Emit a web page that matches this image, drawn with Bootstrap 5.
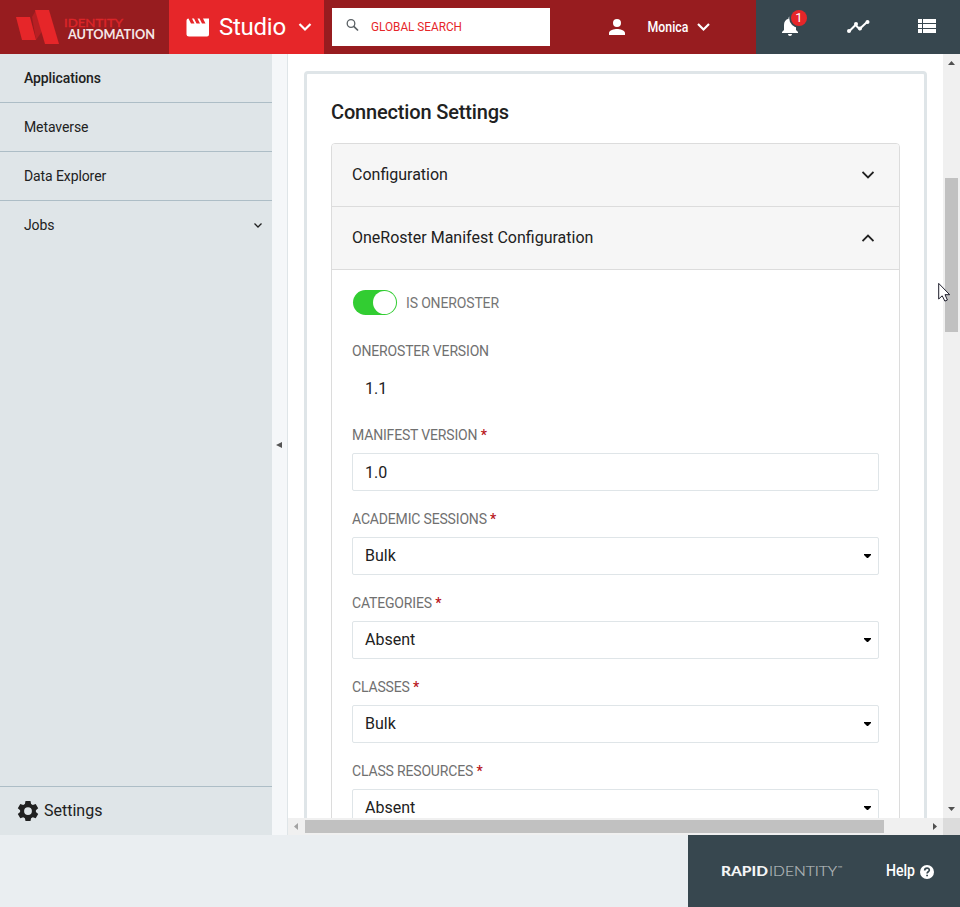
<!DOCTYPE html>
<html lang="en">
<head>
<meta charset="utf-8">
<meta name="viewport" content="width=device-width, initial-scale=1">
<title>Studio - Connection Settings</title>
<link href="https://cdn.jsdelivr.net/npm/bootstrap@5.3.0/dist/css/bootstrap.min.css" rel="stylesheet">
<style>
body{font-family:Roboto,"Liberation Sans",sans-serif;font-size:14px;color:#212121;background:#eaeef1;height:907px;overflow:hidden}
svg{display:block;flex:none}
.topbar{height:54px;background:#971c1f;color:#fff}
.brand-box{width:169px}
.studio-box{width:155px;background:#e62629;font-size:24px;padding-left:16px}
.studio-box span{margin-left:9px;width:67px;white-space:nowrap;letter-spacing:-.25px}
.search-box{width:218px;height:38px;margin-left:8px;padding-left:14px;color:#e62629;font-size:13px}
.search-box span{margin-left:12px;transform:scaleX(.905);transform-origin:left}
.user-box{margin-left:55px;width:151px;font-weight:500}
.user-name{width:44px;margin-left:15px;transform:scaleX(.88);transform-origin:left;white-space:nowrap}
.tools{background:#37474f}
.bell{left:22px;top:14px}
.count{left:35px;top:10px;width:16px;height:16px;background:#e62629;font-size:13px;line-height:16px}
.workspace{height:781px}
.side{width:272px;background:#dfe5e8}
.side a{height:49px;padding:0 8px 0 24px;color:#212121;border-bottom:1px solid #adbdc6;letter-spacing:-.1px}
.side div a:last-child{border:0}
.side a.settings{border-top:1px solid #adbdc6;border-bottom:0;padding-left:17px;font-size:16px;letter-spacing:0}
.gutter{width:16px;background:#f5f7f9;border-right:1px solid #dfe5e8;padding-right:2px}
.viewport-box{width:655px;height:764px;padding:17px 16px 0}
.panel-box{border:3px solid #dfe5e8;border-radius:4px;height:1100px;padding:23px 24px 0}
h1{font-size:20px;line-height:30px;font-weight:500;margin:0 0 16px;letter-spacing:-.16px}
.sections{border-color:#dcdcdc;border-radius:4px;font-size:16px;color:#212121}
.sections .card-header{height:63px;padding:0 25px 1px 20px;background:#f6f6f6;border-color:#dcdcdc}
.sections .card-header:first-child{border-radius:3px 3px 0 0}
.sections .card-body{padding:0 20px}
.toggle-row{height:69px;padding:0 0 4px 1px;color:#757575;font-size:14px}
.toggle-name{margin-left:9px;padding-top:2px;letter-spacing:-.15px}
.switch-pill{width:44px;height:25px;border-radius:13px;background:#32cd32;padding:1px}
.switch-pill i{width:23px;height:23px;border-radius:50%;background:#fff}
.field-group{height:84px}
.field-group label{display:block;height:24px;line-height:24px;margin-bottom:6px;font-size:14px;color:#707070;letter-spacing:-.17px}
.field-group b{color:#b8141a;font-weight:500}
.value-box{height:38px;padding:2px 7px 0 12px;border:1px solid #dfe5e8;border-radius:2px}
.value-box.plain{border-color:transparent}
.value-box.pick{padding-top:0}
.pick svg{margin-top:-1px}
.vbar{width:17px;height:764px;background:#f0f0f0;padding:7px 2px 7px}
.vbar div{width:13px;height:154px;background:#c1c1c1;margin-top:113px}
.hbar{height:17px;background:#f0f0f0}
.hbar div{width:579px;height:13px;background:#c1c1c1;margin-left:6px}
.corner{width:17px;height:17px;background:#dcdcdc}
.pointer{left:938px;top:283px}
footer{height:72px}
.foot{width:272px;background:#37474f;color:#fff;padding-left:33px}
.help{font-size:16px;font-weight:500;margin-left:41px;width:29px;transform:scaleX(.88);transform-origin:left}
</style>
<script src="https://cdn.jsdelivr.net/npm/bootstrap@5.3.0/dist/js/bootstrap.bundle.min.js"></script>
</head>
<body>
<header class="topbar d-flex align-items-stretch">
  <div class="brand-box">
    <svg width="169" height="54" viewBox="0 0 169 54">
      <path d="M32 17L36 10L43 30L36 40Z" fill="#b71f23"/>
      <path d="M16 17H30L36 40H22Z" fill="#e62629"/><path d="M35 10H49L59 44H45Z" fill="#e62629"/>
      <text x="64" y="26.500" font-family="Lato,sans-serif" font-size="11.800" font-weight="400" fill="#dc2529" stroke="#dc2529" stroke-width=".4" textLength="59" lengthAdjust="spacingAndGlyphs">IDENTITY</text>
      <text x="68" y="39" font-family="Lato,sans-serif" font-size="12.500" font-weight="700" fill="#f5e6e6" textLength="87" lengthAdjust="spacingAndGlyphs">AUTOMATION</text>
    </svg>
  </div>
  <div class="studio-box d-flex align-items-center">
    <svg width="25" height="27" viewBox="0 0 25 27"><path fill="#fff" d="M3.500 4.500L6 9.500H9.500L7 4.500H9L11.500 9.500H15L12.500 4.500H14.500L17 9.500H20.500L18 4.500H24V20.500Q24 22.500 22 22.500H4Q1.500 22.500 1.500 20.500V6.500Q1.500 4.500 3.500 4.500Z"/></svg>
    <span>Studio</span>
    <svg class="ms-2" width="24" height="24" viewBox="0 0 24 24"><path d="M5.500 9L11 14.500L16.500 9" fill="none" stroke="#fff" stroke-width="2.200"/></svg>
  </div>
  <div class="search-box bg-white d-flex align-items-center align-self-center">
    <svg width="13" height="16" viewBox="0 0 13 16"><circle cx="5" cy="4.500" r="3.800" fill="none" stroke="#5b6165" stroke-width="1.300"/><path d="M7.800 7.300L12 11.500" stroke="#5b6165" stroke-width="1.700"/></svg>
    <span>GLOBAL SEARCH</span>
  </div>
  <div class="user-box d-flex align-items-center">
    <svg width="24" height="24" viewBox="0 0 24 24"><path fill="#fff" d="M12 12a4 4 0 1 0 0-8 4 4 0 0 0 0 8zm0 2c-2.700 0-8 1.300-8 4v2h16v-2c0-2.700-5.300-4-8-4z"/></svg>
    <span class="user-name ps-1">Monica</span>
    <svg class="ms-1" width="24" height="24" viewBox="0 0 24 24"><path d="M6 9L11.500 14.500L17 9" fill="none" stroke="#fff" stroke-width="2.200"/></svg>
  </div>
  <div class="tools flex-grow-1 d-flex align-items-center position-relative">
    <svg class="position-absolute bell" width="24" height="24" viewBox="0 0 24 24"><path fill="#fff" d="M12 22c1.100 0 2-.9 2-2h-4c0 1.100.9 2 2 2zm6-6v-5c0-3.100-1.600-5.600-4.500-6.300V4a1.500 1.500 0 0 0-3 0v.7C7.600 5.400 6 7.900 6 11v5l-2 2v1h16v-1l-2-2z"/><circle cx="21" cy="4" r="9.800" fill="#37474f"/></svg>
    <span class="position-absolute count rounded-circle text-center">1</span>
    <svg style="margin-left:90px" width="24" height="24" viewBox="0 0 24 24"><path d="M3 16.500L9.500 10L13.500 14L21 7" fill="none" stroke="#fff" stroke-width="2"/><g fill="#fff"><circle cx="3" cy="16" r="2"/><circle cx="10" cy="9" r="2"/><circle cx="14" cy="13.500" r="2"/><circle cx="21.500" cy="7" r="2"/></g></svg>
    <svg style="margin:-2px 0 0 45px" width="24" height="24" viewBox="0 0 24 24"><path fill="#fff" d="M3 5h4v4H3zm5 0h13v4H8zM3 10h4v4H3zm5 0h13v4H8zM3 15h4v4H3zm5 0h13v4H8z"/></svg>
  </div>
</header>
<main class="workspace d-flex">
  <nav class="side d-flex flex-column justify-content-between">
    <div class="d-flex flex-column">
      <a class="d-flex align-items-center text-decoration-none" style="font-weight:500" href="#">Applications</a>
      <a class="d-flex align-items-center text-decoration-none" href="#">Metaverse</a>
      <a class="d-flex align-items-center text-decoration-none" href="#">Data Explorer</a>
      <a class="d-flex align-items-center justify-content-between text-decoration-none" href="#">Jobs
        <svg width="12" height="12" viewBox="0 0 12 12"><path d="M2.500 3.500L6 7L9.500 3.500" fill="none" stroke="#212121" stroke-width="1.300"/></svg></a>
    </div>
    <a class="settings d-flex align-items-center text-decoration-none" href="#">
      <svg width="22" height="22" viewBox="1 1 22 22"><path fill="#212121" fill-rule="evenodd" d="M9.500 2h5l.6 3 1.700 1 2.900-1 2.500 4.200-2.300 2v1.900l2.300 2-2.500 4.100-2.900-1-1.700 1-.6 2.900h-5l-.6-2.900-1.700-1-2.900 1-2.500-4.100 2.300-2v-1.900l-2.300-2L4.300 5l2.900 1 1.700-1zM12 8.200a3.900 3.900 0 1 0 0 7.800 3.900 3.900 0 0 0 0-7.800z"/></svg>
      <span style="margin-left:5px">Settings</span></a>
  </nav>
  <div class="gutter d-flex align-items-center justify-content-center"><svg width="6" height="6" viewBox="0 0 6 6"><path d="M0 3L6 0V6Z" fill="#555"/></svg></div>
  <div class="bg-white flex-grow-1 d-flex flex-column">
    <div class="d-flex">
      <section class="viewport-box overflow-hidden">
        <div class="panel-box">
          <h1>Connection Settings</h1>
          <div class="card sections">
            <div class="card-header d-flex align-items-center justify-content-between">Configuration
              <svg width="12" height="12" viewBox="0 0 12 12"><path d="M.5 3L6 8.500L11.500 3" fill="none" stroke="#212121" stroke-width="1.800"/></svg></div>
            <div class="card-header d-flex align-items-center justify-content-between">OneRoster Manifest Configuration
              <svg width="12" height="12" viewBox="0 0 12 12"><path d="M.5 9L6 3.500L11.500 9" fill="none" stroke="#212121" stroke-width="1.800"/></svg></div>
            <div class="card-body">
              <div class="toggle-row d-flex align-items-center">
                <span class="switch-pill d-flex justify-content-end"><i></i></span><span class="toggle-name">IS ONEROSTER</span>
              </div>
              <div class="field-group"><label>ONEROSTER VERSION</label><div class="value-box plain d-flex align-items-center">1.1</div></div>
              <div class="field-group"><label>MANIFEST VERSION <b>*</b></label><div class="value-box d-flex align-items-center">1.0</div></div>
              <div class="field-group"><label>ACADEMIC SESSIONS <b>*</b></label><div class="value-box pick d-flex align-items-center justify-content-between">Bulk<svg width="7" height="4" viewBox="0 0 7 4"><path d="M0 0H7V1L4 4H3L0 1Z"/></svg></div></div>
              <div class="field-group"><label>CATEGORIES <b>*</b></label><div class="value-box pick d-flex align-items-center justify-content-between">Absent<svg width="7" height="4" viewBox="0 0 7 4"><path d="M0 0H7V1L4 4H3L0 1Z"/></svg></div></div>
              <div class="field-group"><label>CLASSES <b>*</b></label><div class="value-box pick d-flex align-items-center justify-content-between">Bulk<svg width="7" height="4" viewBox="0 0 7 4"><path d="M0 0H7V1L4 4H3L0 1Z"/></svg></div></div>
              <div class="field-group"><label>CLASS RESOURCES <b>*</b></label><div class="value-box pick d-flex align-items-center justify-content-between">Absent<svg width="7" height="4" viewBox="0 0 7 4"><path d="M0 0H7V1L4 4H3L0 1Z"/></svg></div></div>
            </div>
          </div>
        </div>
      </section>
      <div class="vbar d-flex flex-column">
        <svg class="align-self-center" width="7" height="4" viewBox="0 0 7 4"><path d="M0 4L3.500 0L7 4Z" fill="#505050"/></svg>
        <div></div>
        <svg class="align-self-center mt-auto" width="7" height="4" viewBox="0 0 7 4"><path d="M0 0L3.500 4L7 0Z" fill="#505050"/></svg>
      </div>
    </div>
    <div class="d-flex">
      <div class="hbar flex-grow-1 d-flex align-items-center ps-1">
        <svg style="margin:0 1px 0 2px" width="4" height="7" viewBox="0 0 4 7"><path d="M4 0V7L0 3.500Z" fill="#a3a3a3"/></svg>
        <div></div>
        <svg class="ms-auto me-1" width="6" height="7" viewBox="0 0 6 7"><path d="M0 0V7L4 3.500Z" fill="#505050"/></svg>
      </div>
      <div class="corner"></div>
    </div>
  </div>
</main>
<footer class="d-flex justify-content-end">
  <div class="foot d-flex align-items-center">
    <svg width="124" height="20" viewBox="0 0 124 20"><g font-family="Lato,sans-serif" font-size="14"><text x="0" y="15" font-weight="900" fill="#f4f5f5" textLength="47" lengthAdjust="spacingAndGlyphs">RAPID</text><text x="48" y="15" font-weight="300" fill="#b5babc" stroke="#b5babc" stroke-width=".2" textLength="68" lengthAdjust="spacingAndGlyphs">IDENTITY</text><text x="116.500" y="9" font-size="6" fill="#b5babc">™</text></g></svg>
    <span class="help">Help</span>
    <svg style="margin:2px 0 0 5px" width="14" height="14" viewBox="0 0 14 14"><circle cx="7" cy="7" r="7" fill="#fff"/><path d="M4.700 5.500C4.700 2.300 9.500 2.400 9.300 5.200C9.200 6.800 7.100 6.700 7.100 8.500" fill="none" stroke="#37474f" stroke-width="1.700"/><path d="M6.200 9.700h1.800v1.600H6.200z" fill="#37474f"/></svg>
  </div>
</footer>
<svg class="position-absolute pointer" width="13" height="20" viewBox="0 0 13 20"><path d="M.7.400V16L4.200 12.800L6.900 18.100L9.400 17L7 11.700H11.700Z" fill="#fff" stroke="#1d1d2b" stroke-width="1"/></svg>
</body>
</html>
